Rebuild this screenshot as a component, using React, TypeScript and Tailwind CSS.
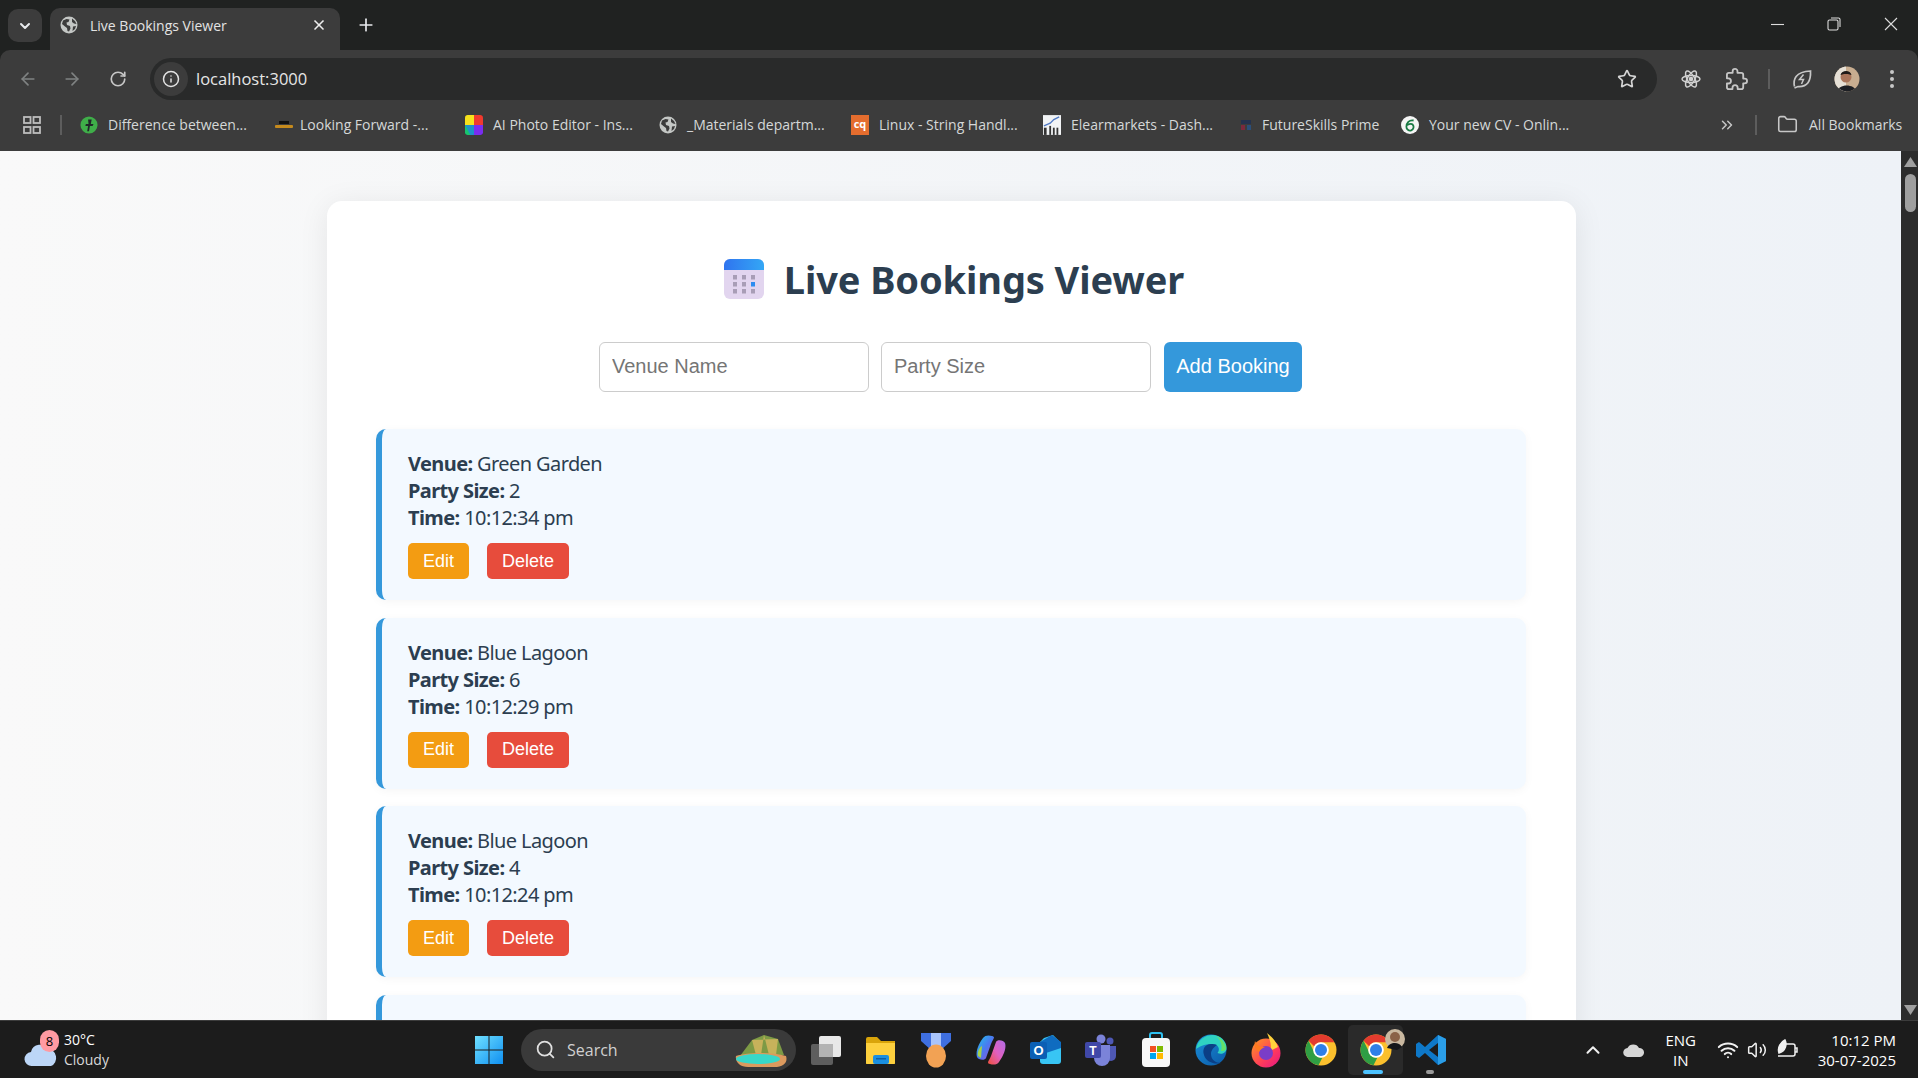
import React from "react";
import { ArrowLeft, ArrowRight, RotateCw, Info, Star, Plus, X, ChevronDown, ChevronUp, Folder, ChevronsRight, Search, Wifi, Volume2 } from "lucide-react";

const ui = "font-['Open_Sans','Noto_Sans',sans-serif]";

function GlobeIcon({ size = 18 }: { size?: number }) {
  return (
    <svg width={size} height={size} viewBox="0 0 18 18" className="shrink-0">
      <circle cx="9" cy="9" r="8.5" fill="#c4c7c5" />
      <path d="M3 4.5 6.5 3l3 .5-1 2.5-2 .5.5 2.5 3 1 .5 2.5-1.5 3-1.5-.5-.5-3-2-1.5L2 8Z" fill="#3c3c3c" />
      <path d="M12 2.5l3 2.5 1.5 3-2.5-.5L12 6Zm1 8 3-.5-1 3-2.5 2Z" fill="#3c3c3c" />
    </svg>
  );
}

function Bookmark({ icon, text, w, tight }: { icon: React.ReactNode; text: string; w: string; tight?: boolean }) {
  return (
    <div className={`flex items-center shrink-0 ${w}`}>
      <span className={`w-[18px] h-[20px] flex items-center justify-center shrink-0 ${tight ? "mr-[7px]" : "mr-2.5"}`}>{icon}</span>
      <span className="text-[14px] text-[#d5d8d8] whitespace-nowrap">{text}</span>
    </div>
  );
}

function TabStrip() {
  return (
    <div className="h-[50px] bg-[#202221] flex items-end pl-2 relative">
      <div className="w-[34px] h-[33px] bg-[#3c3c3c] rounded-[10px] mb-[8px] flex items-center justify-center">
        <ChevronDown size={16} strokeWidth={3} color="#e8eaed" />
      </div>
      <div className="ml-2 w-[290px] h-[42px] bg-[#3c3c3c] rounded-t-[10px] flex items-center pl-[10px] pr-[13px] pb-[8px]">
        <GlobeIcon />
        <span className="ml-[12px] text-[14px] text-[#e3e3e3] whitespace-nowrap">Live Bookings Viewer</span>
        <X size={16} strokeWidth={2.5} color="#eee" className="ml-auto" />
      </div>
      <Plus size={20} strokeWidth={2} color="#e8eaed" className="ml-[16px] mb-[15px]" />
      <div className="ml-auto h-full flex items-center pr-[19px] pb-[2px]">
        <svg width="16" height="16" viewBox="0 0 16 16"><path d="M1 8.5h13" stroke="#ddd" strokeWidth="1.1" /></svg>
        <svg width="16" height="16" viewBox="0 0 16 16" className="ml-[40px]"><rect x="2" y="4" width="10" height="10" rx="1.5" fill="none" stroke="#ddd" strokeWidth="1.1" /><path d="M5 2h7.5A1.5 1.5 0 0 1 14 3.500V11" fill="none" stroke="#ddd" strokeWidth="1.1" /></svg>
        <svg width="16" height="16" viewBox="0 0 16 16" className="ml-[41px]"><path d="M2 2l12 12M14 2 2 14" stroke="#ddd" strokeWidth="1.1" /></svg>
      </div>
    </div>
  );
}

function Toolbar() {
  return (
    <div className="h-[56px] pt-[2px] bg-[#3c3c3c] flex items-center rounded-t-[10px]">
      <ArrowLeft size={20} color="#7f8282" strokeWidth={2} className="ml-[18px]" />
      <ArrowRight size={20} color="#7f8282" strokeWidth={2} className="ml-[24px]" />
      <RotateCw size={18} color="#c7c7c7" strokeWidth={2.2} className="ml-[27px]" />
      <div className="ml-[23px] w-[1507px] h-[42px] rounded-full bg-[#292a2a] flex items-center pl-[4px] pr-[20px]">
        <div className="w-[34px] h-[34px] rounded-full bg-[#3c3c3c] flex items-center justify-center">
          <Info size={18} color="#e3e3e3" strokeWidth={2} />
        </div>
        <span className="ml-[8px] text-[16.5px] text-[#e6e6e6]">localhost:3000</span>
        <Star size={20} color="#d5d5d5" strokeWidth={2} className="ml-auto" />
      </div>
      <svg width="22" height="22" viewBox="0 0 22 22" className="ml-[23px]" fill="none" stroke="#d0d0d0" strokeWidth="1.5">
        <ellipse cx="11" cy="11" rx="9" ry="3.6" />
        <ellipse cx="11" cy="11" rx="9" ry="3.6" transform="rotate(60 11 11)" />
        <ellipse cx="11" cy="11" rx="9" ry="3.6" transform="rotate(120 11 11)" />
        <circle cx="11" cy="11" r="1.6" fill="#d0d0d0" />
      </svg>
      <svg width="23" height="23" viewBox="0 0 24 24" className="ml-[23px]" fill="none" stroke="#c7c7c7" strokeWidth="1.900" strokeLinejoin="round">
        <path d="M20.5 11H19V7c0-1.100-.9-2-2-2h-4V3.500C13 2.120 11.880 1 10.500 1S8 2.120 8 3.500V5H4c-1.100 0-1.990.9-1.990 2v3.800H3.500c1.490 0 2.700 1.210 2.700 2.700s-1.210 2.700-2.700 2.700H2V20c0 1.100.9 2 2 2h3.800v-1.500c0-1.490 1.210-2.700 2.700-2.700 1.490 0 2.700 1.210 2.700 2.700V22H17c1.100 0 2-.9 2-2v-4h1.500c1.380 0 2.500-1.120 2.500-2.500S21.880 11 20.500 11z" />
      </svg>
      <div className="ml-[20px] w-[2px] h-[20px] bg-[#5d5d5d]" />
      <svg width="22" height="22" viewBox="0 0 22 22" className="ml-[21px]" fill="none" stroke="#c7c7c7" strokeWidth="1.7">
        <path d="M3.500 18.500C2 12 4 3.500 19.500 3c.500 10-3 16-12.500 15.500l-3.500 1.500" />
        <path d="M12.500 6.500 8.500 11.500h4l-2 4.500" strokeWidth="1.5" />
      </svg>
      <svg width="26" height="26" viewBox="0 0 26 26" className="ml-[21px]">
        <defs><clipPath id="av"><circle cx="13" cy="13" r="12.500" /></clipPath></defs>
        <g clipPath="url(#av)">
          <rect width="26" height="26" fill="#c8ad90" />
          <rect width="12" height="26" fill="#e6e0d6" />
          <circle cx="12" cy="11" r="5.500" fill="#a9745a" />
          <path d="M6.500 9c1-5 10-5.500 11 0-3-1.500-8-1.500-11 0Z" fill="#1f1a18" />
          <path d="M3 26c1-8 17-9 20 0Z" fill="#1d1f24" />
        </g>
      </svg>
      <svg width="6" height="20" viewBox="0 0 6 20" className="ml-[29px]"><circle cx="3" cy="3" r="2" fill="#c7c7c7" /><circle cx="3" cy="10" r="2" fill="#c7c7c7" /><circle cx="3" cy="17" r="2" fill="#c7c7c7" /></svg>
    </div>
  );
}

function BookmarksBar() {
  return (
    <div className="h-[45px] pb-[8px] bg-[#3c3c3c] flex items-center">
      <svg width="18" height="18" viewBox="0 0 18 18" className="ml-[23px]" fill="none" stroke="#bdbdbd" strokeWidth="1.800">
        <rect x="1" y="1" width="6.500" height="6" /><rect x="10.500" y="1" width="6.500" height="6" /><rect x="1" y="11" width="6.500" height="6" /><rect x="10.500" y="11" width="6.500" height="6" />
      </svg>
      <div className="ml-[19px] w-[2px] h-[20px] bg-[#5d5d5d] mr-[18px]" />
      <Bookmark w="w-[195px]" text="Difference between..." icon={
        <svg width="20" height="20" viewBox="0 0 20 20"><circle cx="10" cy="10" r="9.500" fill="#3fae49" /><path d="M9 4h4l-1 5h3l-1 2h-3l-1 6H8l1-6H6l.5-2H9.500Z" fill="#21262a" /></svg>
      } />
      <Bookmark tight w="w-[190px]" text="Looking Forward -..." icon={
        <svg width="18" height="10" viewBox="0 0 18 10"><rect y="1" x="4" width="10" height="3" fill="#111" /><rect y="5" width="18" height="3" rx="1" fill="#c58a1d" /></svg>
      } />
      <Bookmark w="w-[194px]" text="AI Photo Editor - Ins..." icon={
        <svg width="20" height="22" viewBox="0 0 20 22"><rect width="20" height="22" rx="3" fill="#222" /><path d="M0 3a3 3 0 0 1 3-3h7v11H0Z" fill="#f6e11c" /><path d="M10 0h7a3 3 0 0 1 3 3v8H10Z" fill="#f03a2e" /><path d="M0 11h10v11H3a3 3 0 0 1-3-3Z" fill="#18c56e" /><path d="M10 11h10v8a3 3 0 0 1-3 3h-7Z" fill="#7a2df0" /><path d="M0 11h10V22H6Z" fill="#1f7cf0" opacity=".7" /></svg>
      } />
      <Bookmark w="w-[192px]" text="_Materials departm..." icon={<GlobeIcon />} />
      <Bookmark w="w-[192px]" text="Linux - String Handl..." icon={
        <div className="w-[20px] h-[20px] bg-[#e46d2e] text-white text-[11px] font-bold leading-[18px] text-center">cq</div>
      } />
      <Bookmark w="w-[194px]" text="Elearmarkets - Dash..." icon={
        <svg width="20" height="22" viewBox="0 0 20 22"><rect width="20" height="22" fill="#f1f3f5" /><path d="M1 12 8 9l4-4 6-3" fill="none" stroke="#5079c4" strokeWidth="1.500" /><rect x="1" y="14" width="3" height="8" fill="#333" /><rect x="7" y="12" width="2" height="10" fill="#333" /><rect x="11" y="14" width="2" height="8" fill="#333" /><rect x="15" y="14" width="2" height="8" fill="#333" /></svg>
      } />
      <Bookmark tight w="w-[164px]" text="FutureSkills Prime" icon={
        <svg width="10" height="10" viewBox="0 0 10 10"><rect width="10" height="4" fill="#24324f" /><rect y="5" width="4" height="5" fill="#7a2a3c" /><rect x="6" y="5" width="4" height="5" fill="#2a4f7a" /></svg>
      } />
      <Bookmark w="w-[290px]" text="Your new CV - Onlin..." icon={
        <svg width="20" height="20" viewBox="0 0 20 20"><circle cx="10" cy="10" r="10" fill="#f5f5f5" /><path d="M14 5C9 4 6 8 6 12a4 4 0 1 0 7-2.500c-2-1.500-4-.5-6 .5" fill="none" stroke="#1a7a44" strokeWidth="2" /></svg>
      } />
      <ChevronsRight size={18} color="#c7c7c7" strokeWidth={2} className="ml-[27px]" />
      <div className="ml-[19px] w-[2px] h-[20px] bg-[#5d5d5d]" />
      <Folder size={21} color="#c7c7c7" strokeWidth={1.800} className="ml-[20px]" />
      <span className="ml-[11px] text-[14px] text-[#d5d8d8] whitespace-nowrap">All Bookmarks</span>
    </div>
  );
}

function Booking({ venue, size, time }: { venue?: string; size?: number; time?: string }) {
  return (
    <div className="shrink-0 h-[171px] bg-[#f3f9ff] border-l-[6px] border-[#3498db] rounded-[10px] shadow-[0_2px_10px_rgba(0,0,0,0.04)] pl-[26px] pt-[21px] text-[20px] leading-[27px] text-[#2c3e50] font-['Noto_Sans',sans-serif] tracking-[-0.6px]">
      {venue && (
        <>
          <div><b className="font-bold">Venue:</b> {venue}</div>
          <div><b className="font-bold">Party Size:</b> {size}</div>
          <div><b className="font-bold">Time:</b> {time}</div>
          <div className="flex gap-[18px] mt-[12px] font-['Liberation_Sans',sans-serif] text-[18px] text-white tracking-normal">
            <button className="w-[61px] h-[36px] bg-[#f39c12] rounded-[5px]">Edit</button>
            <button className="w-[82px] h-[36px] bg-[#e74c3c] rounded-[5px]">Delete</button>
          </div>
        </>
      )}
    </div>
  );
}

function Page() {
  return (
    <div className="flex-1 min-h-0 flex">
      <div className="flex-1 min-w-0 overflow-hidden bg-gradient-to-r from-[#f9f9f9] to-[#eef2f7] pt-[50px] pl-[327px]">
        <div className="w-[1249px] bg-white rounded-[15px] shadow-[0_4px_30px_rgba(0,0,0,0.08)] pl-[49px] pr-[50px] pt-[50px] h-[1000px] flex flex-col">
          <div className="flex items-center justify-center h-[60px] pl-[5px] -mt-[2px]">
            <svg width="42" height="42" viewBox="0 0 42 42" className="shrink-0 mr-[19px]">
              <defs>
                <linearGradient id="calTop" x1="0" x2="1" y1="0" y2="0"><stop offset="0" stopColor="#2f74ef" /><stop offset="1" stopColor="#34a7f5" /></linearGradient>
              </defs>
              <rect x="1" y="1" width="40" height="40" rx="6" fill="#e2d5ef" />
              <path d="M1 12V7a6 6 0 0 1 6-6h28a6 6 0 0 1 6 6v5Z" fill="url(#calTop)" />
              {[10, 19, 28].map((x) => [17, 24, 31].map((y) => (
                <rect key={`${x}-${y}`} x={x} y={y} width="4" height="4.500" fill={x === 28 && y === 24 ? "#2d8cf0" : "#a89db6"} />
              )))}
            </svg>
            <h1 className="text-[38px] leading-[60px] font-bold text-[#2c3e50] font-['Noto_Sans',sans-serif] tracking-[-0.1px]">Live Bookings Viewer</h1>
          </div>
          <div className="flex items-center justify-center gap-[12px] mt-[33px] font-['Liberation_Sans',sans-serif] text-[20px] pr-px">
            <input placeholder="Venue Name" className="w-[270px] h-[50px] border border-[#ccc] rounded-[6px] px-[12px] pb-[2px] placeholder:text-[#757575] outline-none" />
            <input placeholder="Party Size" className="w-[270px] h-[50px] border border-[#ccc] rounded-[6px] px-[12px] pb-[2px] placeholder:text-[#757575] outline-none" />
            <button className="ml-px w-[138px] h-[50px] pb-[2px] bg-[#3498db] text-white rounded-[6px]">Add Booking</button>
          </div>
          <div className="mt-[37px] flex flex-col gap-[17.5px]">
            <Booking venue="Green Garden" size={2} time="10:12:34 pm" />
            <Booking venue="Blue Lagoon" size={6} time="10:12:29 pm" />
            <Booking venue="Blue Lagoon" size={4} time="10:12:24 pm" />
            <Booking />
          </div>
        </div>
      </div>
      <div className="w-[17px] bg-[#2c2c2c] flex flex-col items-center justify-between pt-[6px] pb-[5px] pl-px">
        <div className="flex flex-col items-center">
          <svg width="13" height="10" viewBox="0 0 13 10"><path d="M6.500 0 13 10H0Z" fill="#9f9f9f" /></svg>
          <div className="w-[11px] h-[38px] bg-[#9f9f9f] rounded-full mt-[7px]" />
        </div>
        <svg width="13" height="10" viewBox="0 0 13 10"><path d="M6.500 10 13 0H0Z" fill="#9f9f9f" /></svg>
      </div>
    </div>
  );
}

function Tb({ children }: { children: React.ReactNode }) {
  return <div className="w-[55px] h-[50px] flex items-center justify-center shrink-0">{children}</div>;
}

function ChromeIcon() {
  return (
    <svg width="32" height="32" viewBox="0 0 32 32">
      <circle cx="16" cy="16" r="15.500" fill="#fbc02d" />
      <path d="M16 .5A15.500 15.500 0 0 1 29.400 8.300H16a7.800 7.800 0 0 0-6.800 4L3.500 6.800A15.500 15.500 0 0 1 16 .5Z" fill="#e33b2e" />
      <path d="M3.500 6.800 9.800 19.500a7.800 7.800 0 0 0 7.500 4.200L13.500 31.300A15.500 15.500 0 0 1 3.500 6.800Z" fill="#2f9e44" />
      <circle cx="16" cy="16" r="7.800" fill="#fff" />
      <circle cx="16" cy="16" r="6" fill="#2f7fe8" />
    </svg>
  );
}

function Taskbar() {
  return (
    <div className="h-[58px] bg-[#1c1c1c] border-t border-[#3c3c3c] flex items-center relative shrink-0">
      <div className="w-[474px] shrink-0 flex items-center pl-[24px]">
        <div className="relative w-[34px] h-[34px]">
          <svg width="34" height="26" viewBox="0 0 34 26" className="absolute top-[9px] left-0">
            <path d="M8 24a7 7 0 0 1-1-14 9 9 0 0 1 17-2 6.500 8 0 0 1 3 16Z" fill="#bcd6f7" />
          </svg>
          <div className="absolute -top-[3px] left-[16px] w-[19px] h-[22px] rounded-full bg-[#ff9aa2] text-black text-[13px] leading-[22px] text-center">8</div>
        </div>
        <div className="ml-[6px] text-[14px] leading-[20px] text-white">
          <div>30°C</div>
          <div className="text-[#d8d8d8]">Cloudy</div>
        </div>
      </div>
      <svg width="30" height="30" viewBox="0 0 30 30" className="shrink-0">
        <defs><linearGradient id="win" x1="0" x2="1" y1="0" y2="1"><stop offset="0" stopColor="#6fe0ff" /><stop offset="1" stopColor="#0f8ff0" /></linearGradient></defs>
        <path d="M1 1h13.500v13.500H1ZM15.500 1H29v13.500H15.500ZM1 15.500h13.500V29H1ZM15.500 15.500H29V29H15.500Z" fill="url(#win)" />
      </svg>
      <div className="ml-[17px] w-[275px] h-[42px] rounded-full bg-[#3a3a3a] shrink-0 flex items-center pl-[14px]">
        <Search size={21} color="#e0e0e0" strokeWidth={2} />
        <span className="ml-[11px] text-[16px] text-[#d0d0d0]">Search</span>
        <svg width="60" height="36" viewBox="0 0 60 36" className="ml-auto mr-[2px]">
          <path d="M6 24 18 8l12-5 14 4 6 16Z" fill="#7d9a45" />
          <path d="M18 8l4 15h5l3-20 5 20h7L44 7" fill="#c7b25b" />
          <path d="M2 24c12-4 36-4 50 0 2 6-2 11-12 11H14C6 35 1 30 2 24Z" fill="#dc9a5e" />
          <ellipse cx="24" cy="27" rx="22" ry="5" fill="#37d8c9" />
        </svg>
      </div>
      <div className="ml-[2px] flex items-center">
        <Tb>
          <svg width="32" height="32" viewBox="0 0 32 32">
            <rect x="1" y="10" width="22" height="21" rx="2" fill="#5e5e5e" />
            <rect x="9" y="2" width="22" height="21" rx="2" fill="#e8e8e8" />
            <rect x="9" y="10" width="14" height="13" fill="#b3b3b3" />
          </svg>
        </Tb>
        <Tb>
          <svg width="32" height="32" viewBox="0 0 32 32">
            <path d="M1 5a2 2 0 0 1 2-2h9l4 4h14v22a1 1 0 0 1-1 1H2a1 1 0 0 1-1-1Z" fill="#d9a40a" />
            <path d="M1 9h29v20a1 1 0 0 1-1 1H2a1 1 0 0 1-1-1Z" fill="#fdd03e" />
            <rect x="8" y="21" width="16" height="9" rx="2" fill="#1a8fe0" />
            <rect x="11" y="24" width="10" height="1.500" fill="#0c5fa5" />
          </svg>
        </Tb>
        <Tb>
          <svg width="32" height="36" viewBox="0 0 32 36">
            <path d="M1 1h30v8L21 18H11L1 9Z" fill="#3f6fe0" />
            <path d="M11 1h10v17H11Z" fill="#a9c4fb" />
            <ellipse cx="16" cy="24" rx="10" ry="11.500" fill="#f2a254" />
          </svg>
        </Tb>
        <Tb>
          <svg width="30" height="32" viewBox="0 0 30 32">
            <defs>
              <linearGradient id="co1" x1="0" x2="1" y1="0" y2="1"><stop offset="0" stopColor="#1ec8e8" /><stop offset=".5" stopColor="#4a7af0" /><stop offset="1" stopColor="#9a4fd8" /></linearGradient>
              <linearGradient id="co2" x1="0" x2="1" y1="1" y2="0"><stop offset="0" stopColor="#f0503c" /><stop offset=".5" stopColor="#e060c0" /><stop offset="1" stopColor="#b06ce8" /></linearGradient>
            </defs>
            <path d="M7 4c2-3 6-3 9-2 4 1 1 3-1 8l-5 14c-1 3-8 2-9-1-2-6 3-15 6-19Z" fill="url(#co1)" />
            <path d="M23 28c-2 3-6 3-9 2-4-1-1-3 1-8l5-14c1-3 8-2 9 1 2 6-3 15-6 19Z" fill="url(#co2)" />
            <path d="M2 22c-1-5 2-9 4-10l-1 12Z" fill="#a4d24a" />
          </svg>
        </Tb>
        <Tb>
          <svg width="32" height="32" viewBox="0 0 32 32">
            <path d="M14 4 23 1l8 8v18a3 3 0 0 1-3 3H13a3 3 0 0 1-3-3V8Z" fill="#38c5f4" />
            <path d="M10 8 22 1l9 7v6l-21 7Z" fill="#0f6cc0" />
            <rect x="0" y="8" width="17" height="17" rx="2" fill="#0b5fb4" />
            <text x="8.500" y="21" textAnchor="middle" fontSize="13" fontWeight="700" fill="#fff" fontFamily="Liberation Sans">O</text>
          </svg>
        </Tb>
        <Tb>
          <svg width="32" height="32" viewBox="0 0 32 32">
            <circle cx="25" cy="7" r="3.500" fill="#4e58b5" />
            <circle cx="16" cy="5" r="4.500" fill="#7b83d9" />
            <path d="M21 12h10v10a5 5 0 0 1-10 0Z" fill="#4e58b5" />
            <path d="M9 11h16v13a8 8 0 0 1-16 0Z" fill="#7b83d9" />
            <rect x="0" y="8" width="16" height="16" rx="2" fill="#4048a8" />
            <text x="8" y="20.500" textAnchor="middle" fontSize="12" fontWeight="700" fill="#fff" fontFamily="Liberation Sans">T</text>
          </svg>
        </Tb>
        <Tb>
          <svg width="30" height="36" viewBox="0 0 30 36">
            <path d="M9 8V3a2 2 0 0 1 2-2h8a2 2 0 0 1 2 2v5" fill="none" stroke="#2ec0f0" strokeWidth="2" />
            <rect x="1" y="6" width="28" height="29" rx="4" fill="#f7f7f7" />
            <rect x="9" y="14" width="6" height="6" fill="#f25022" />
            <rect x="16" y="14" width="6" height="6" fill="#7fba00" />
            <rect x="9" y="21" width="6" height="6" fill="#00a4ef" />
            <rect x="16" y="21" width="6" height="6" fill="#ffb900" />
          </svg>
        </Tb>
        <Tb>
          <svg width="32" height="36" viewBox="0 0 32 36">
            <defs><linearGradient id="ed" x1="0" x2="1" y1="0" y2="1"><stop offset="0" stopColor="#1a8ed8" /><stop offset="1" stopColor="#0b5aa8" /></linearGradient></defs>
            <circle cx="16" cy="18" r="15.500" fill="url(#ed)" />
            <path d="M1 17C3 5 15 1 23 4c7 3 9 9 8.500 13-.5 4-5 6-9 4 3-4 1-9-6-9-7 0-13 3-15.500 5Z" fill="#2fd2c2" />
            <path d="M31 17c0-5-4-11-10-13 4 3 7 9 5 15 2 0 4 0 5-2Z" fill="#63e06a" />
            <path d="M16 12c-6 0-9 5-7 11 2 7 11 10 17 8-5 0-10-3-10-9 0-4 3-7 6-9-2-1-4-1-6-1Z" fill="#0b3f86" />
          </svg>
        </Tb>
        <Tb>
          <svg width="32" height="36" viewBox="0 0 32 36">
            <defs><linearGradient id="ff" x1="0" x2="1" y1="0" y2="1"><stop offset="0" stopColor="#ff9a1f" /><stop offset=".6" stopColor="#ff3a5c" /><stop offset="1" stopColor="#e31587" /></linearGradient></defs>
            <circle cx="16" cy="21" r="14.500" fill="url(#ff)" />
            <path d="M17 1c5 4 9 8 11 14l-8 4c2-6 0-11-3-18Z" fill="#ffd23c" />
            <circle cx="16" cy="21" r="7" fill="#7a3dc8" />
            <path d="M5 9c2 5 6 6 10 6-3 1-5 3-6 5-4-2-5-7-4-11Z" fill="#ff7a1f" />
          </svg>
        </Tb>
        <Tb><ChromeIcon /></Tb>
        <div className="w-[55px] h-[50px] flex items-center justify-center shrink-0 bg-[#2a2a2a] rounded-[5px] relative">
          <ChromeIcon />
          <svg width="20" height="22" viewBox="0 0 20 22" className="absolute top-[3px] right-[-2px]">
            <circle cx="10" cy="11" r="10" fill="#c9b8a0" />
            <circle cx="10" cy="9" r="5" fill="#8a6248" />
            <path d="M2 20c2-6 12-7 15-1l-5 3Z" fill="#15171a" />
          </svg>
          <div className="absolute bottom-[1px] left-[15px] w-[20px] h-[4px] rounded-full bg-[#4cc2ff]" />
        </div>
        <div className="w-[55px] h-[50px] flex items-center justify-center shrink-0 relative">
          <svg width="32" height="32" viewBox="0 0 32 32">
            <path d="M23 1 31 5v22l-8 4L10 19l-6 5-3-2v-12l3-2 6 5Z" fill="#0e78c8" />
            <path d="M23 9 14 16l9 7Z" fill="#1c1c1c" />
            <path d="M23 1 31 5v22l-8 4Z" fill="#2b9ee8" />
          </svg>
          <div className="absolute bottom-[1px] left-[23px] w-[8px] h-[4px] rounded-full bg-[#9a9a9a]" />
        </div>
      </div>
      <div className="ml-auto flex items-center pr-[22px] text-white text-[15px] leading-[20px]">
        <ChevronUp size={22} color="#f0f0f0" strokeWidth={2.2} />
        <svg width="22" height="14" viewBox="0 0 22 14" className="ml-[19px]"><path d="M5 14a4.500 4.500 0 0 1-.5-9A6.500 6.500 0 0 1 16 5a4.500 4.500 0 0 1 1 9Z" fill="#d6d6d6" /></svg>
        <div className="ml-[13px] w-[46px] text-center">
          <div>ENG</div>
          <div>IN</div>
        </div>
        <Wifi size={22} color="#f0f0f0" strokeWidth={2.2} className="ml-[13px]" />
        <Volume2 size={20} color="#f0f0f0" strokeWidth={1.800} className="ml-[8px]" />
        <svg width="22" height="22" viewBox="0 0 22 22" className="ml-[9px]" fill="none" stroke="#f0f0f0" strokeWidth="1.500">
          <path d="M8 5h9a2 2 0 0 1 2 2v8a2 2 0 0 1-2 2H2" />
          <path d="M19 9h2v4h-2" />
          <path d="M3 14C1 8 5 3 9 1c2 4 1 11-6 13Z" fill="#f0f0f0" />
        </svg>
        <div className="ml-[20px] text-right">
          <div>10:12 PM</div>
          <div>30-07-2025</div>
        </div>
      </div>
    </div>
  );
}

export default function App() {
  return (
    <div className={`h-screen w-full overflow-hidden flex flex-col bg-[#202221] ${ui}`}>
      <TabStrip />
      <Toolbar />
      <BookmarksBar />
      <Page />
      <Taskbar />
    </div>
  );
}
